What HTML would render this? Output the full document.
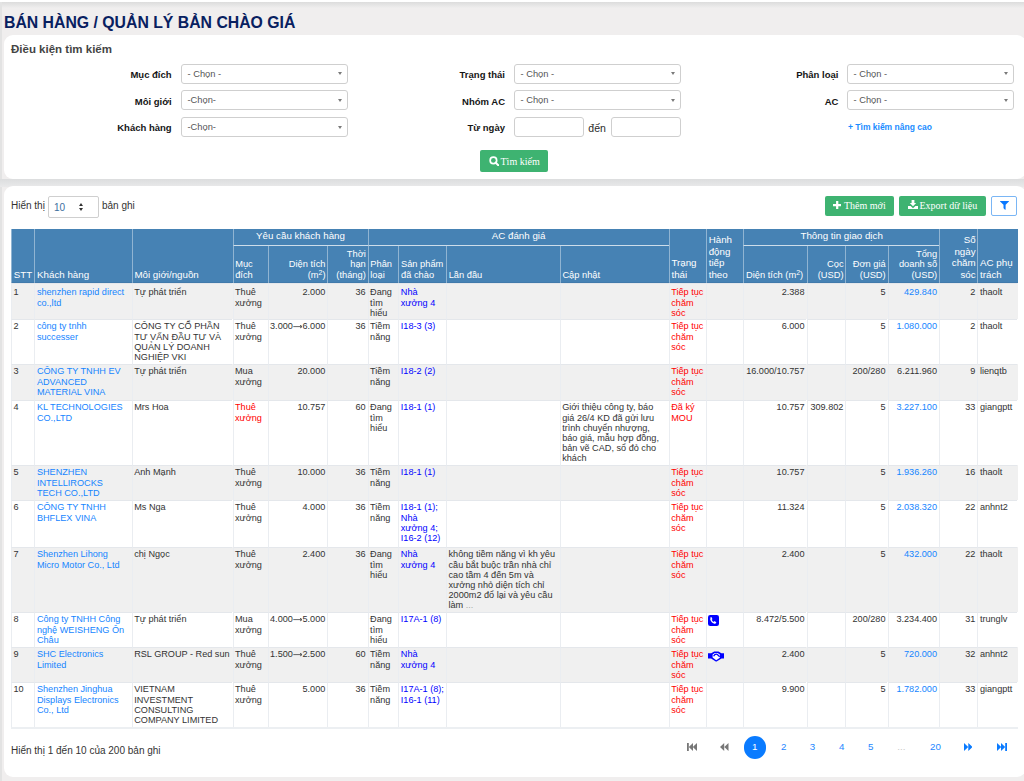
<!DOCTYPE html>
<html><head><meta charset="utf-8">
<style>
*{box-sizing:border-box;}
html,body{margin:0;padding:0;}
body{width:1024px;height:781px;overflow:hidden;position:relative;background:#f0eeee;font-family:"Liberation Sans",sans-serif;color:#333;}
.topbar{position:absolute;left:0;top:0;width:1024px;height:2px;background:#fff;}
.topshade{position:absolute;left:0;top:2px;width:1024px;height:6px;background:linear-gradient(#dcdcdc,#efeeee);}
.leftbar{position:absolute;left:0;top:2px;width:2.2px;height:779px;background:#e3e3e3;}
.title{position:absolute;left:4px;top:13.7px;font-size:15.8px;font-weight:bold;color:#082060;white-space:nowrap;line-height:18px;}
.card{position:absolute;background:#fff;border-radius:9px;}
#c1{left:4px;top:35.2px;width:1022px;height:144px;}
#c2{left:4px;top:186.3px;width:1022px;height:590.7px;}
.gap{position:absolute;left:0;top:179px;width:1024px;height:7.5px;background:linear-gradient(#dcddde,#e9e9ea);}
.abs{position:absolute;white-space:nowrap;}
.h2{left:11px;top:43px;font-size:11.5px;font-weight:bold;color:#444;}
.lbl{font-size:9.5px;font-weight:bold;color:#151515;text-align:right;width:120px;line-height:12px;}
.sel{position:absolute;height:20px;border:1px solid #cfcfcf;border-radius:3px;background:#fff;font-size:9.3px;color:#555;padding-left:5.5px;line-height:18px;}
.sel .arr{position:absolute;right:5.4px;top:7.6px;width:0;height:0;border-left:2.6px solid transparent;border-right:2.6px solid transparent;border-top:3.2px solid #7a7a7a;}
.btn{position:absolute;background:#3eb371;border-radius:2px;color:#fff;font-family:"Liberation Serif",serif;}

.thead{position:absolute;background:#4682b4;}
.hc{position:absolute;border-left:1px solid rgba(255,255,255,.4);border-bottom:1px solid rgba(255,255,255,.73);color:#fff;font-size:9.75px;line-height:10.9px;white-space:nowrap;}
.hc .in{position:absolute;left:1.7px;right:1.8px;}
.hc.ar .in{text-align:right;}
.hc.ac .in{text-align:center;}
.hc .b{bottom:1.3px;}
.hc .m{top:1.8px;}
.hc sup{font-size:7px;line-height:0;vertical-align:3px;}
.tr{position:absolute;}
.td{position:absolute;border-left:1px solid #eaedf1;border-top:1px solid #e4e7eb;font-size:9.15px;line-height:10.24px;padding:1.3px 2px 0 1.5px;white-space:nowrap;color:#333;}
.r0 .td{padding-top:3.3px;}
.td.ar{text-align:right;}
.lk{color:#1585ff;}
.bl{color:#0000ff;}
.rd{color:#ff0000;}
.dots{color:#aaa;}
.ico{position:absolute;}
.tbot{position:absolute;height:2px;background:#eceff2;}
.pg{position:absolute;top:741.4px;font-size:9.75px;color:#1e88ff;line-height:11px;text-align:center;width:20px;}
.bt{font-family:"Liberation Serif",serif;font-size:10px;color:#fff;line-height:12px;}
</style></head><body>
<div class="topbar"></div><div class="topshade"></div><div class="leftbar"></div>
<div class="title">BÁN HÀNG / QUẢN LÝ BẢN CHÀO GIÁ</div>
<div class="gap"></div>
<div class="card" id="c1"></div>
<div class="card" id="c2"></div>

<div class="abs h2">Điều kiện tìm kiếm</div>

<!-- column 1 -->
<div class="abs lbl" style="left:51.6px;top:69px;">Mục đích</div>
<div class="abs lbl" style="left:51.6px;top:95.5px;">Môi giới</div>
<div class="abs lbl" style="left:51.6px;top:122px;">Khách hàng</div>
<div class="sel" style="left:181px;top:63.5px;width:167px;">- Chọn -<span class="arr"></span></div>
<div class="sel" style="left:181px;top:90px;width:167px;">-Chọn-<span class="arr"></span></div>
<div class="sel" style="left:181px;top:117px;width:167px;">-Chọn-<span class="arr"></span></div>
<!-- column 2 -->
<div class="abs lbl" style="left:385px;top:69px;">Trạng thái</div>
<div class="abs lbl" style="left:385px;top:95.5px;">Nhóm AC</div>
<div class="abs lbl" style="left:385px;top:122px;">Từ ngày</div>
<div class="sel" style="left:514px;top:63.5px;width:167px;">- Chọn -<span class="arr"></span></div>
<div class="sel" style="left:514px;top:90px;width:167px;">- Chọn -<span class="arr"></span></div>
<div class="sel" style="left:514px;top:117px;width:70px;"></div>
<div class="abs" style="left:588.3px;top:122.2px;font-size:10.5px;line-height:12px;color:#2a2a2a;">đến</div>
<div class="sel" style="left:611px;top:117px;width:70px;"></div>
<!-- column 3 -->
<div class="abs lbl" style="left:718.4px;top:69px;">Phân loại</div>
<div class="abs lbl" style="left:718.4px;top:95.5px;">AC</div>
<div class="sel" style="left:847px;top:63.5px;width:167px;">- Chọn -<span class="arr"></span></div>
<div class="sel" style="left:847px;top:90px;width:167px;">- Chọn -<span class="arr"></span></div>
<div class="abs" style="left:848px;top:122px;font-size:8.5px;font-weight:bold;color:#1a8cff;">+ Tìm kiếm nâng cao</div>

<div class="btn" style="left:480px;top:150px;width:68px;height:21.5px;"></div>
<svg class="abs" style="left:488.5px;top:155.5px" width="10.5" height="10.5" viewBox="0 0 10 10"><circle cx="4.2" cy="4.2" r="3.1" fill="none" stroke="#fff" stroke-width="1.6"/><path d="M6.3 6.3L9 9" stroke="#fff" stroke-width="1.9" stroke-linecap="round"/></svg>
<div class="abs bt" style="left:500.5px;top:155.5px;">Tìm kiếm</div>


<div class="abs" style="left:11px;top:200px;font-size:10px;color:#333;">Hiển thị</div>
<div class="sel" style="left:48px;top:195.5px;width:51px;height:22px;color:#3d6fa0;line-height:21px;padding-left:5px;font-size:10px;border-radius:2px;">10<span style="position:absolute;left:29.7px;top:6px;width:0;height:0;border-left:2.7px solid transparent;border-right:2.7px solid transparent;border-bottom:3.3px solid #333;"></span><span style="position:absolute;left:29.7px;top:11px;width:0;height:0;border-left:2.7px solid transparent;border-right:2.7px solid transparent;border-top:3.3px solid #333;"></span></div>
<div class="abs" style="left:102px;top:200px;font-size:10px;color:#333;">bản ghi</div>
<div class="btn" style="left:825px;top:195.5px;width:69px;height:20.5px;"></div>
<svg class="abs" style="left:833px;top:200.8px" width="8.4" height="8.4" viewBox="0 0 9 9"><path d="M3.3 0h2.4v3.3H9v2.4H5.7V9H3.3V5.7H0V3.3h3.3z" fill="#fff"/></svg>
<div class="abs bt" style="left:844px;top:199.5px;">Thêm mới</div>
<div class="btn" style="left:899px;top:195.5px;width:86.5px;height:20.5px;"></div>
<svg class="abs" style="left:907.5px;top:200px" width="10" height="9" viewBox="0 0 10 9"><path d="M3.6 0h2.8v3H8.2L5 6.2 1.8 3h1.8z" fill="#fff"/><path d="M0 6h2.6L5 8.2 7.4 6H10v3H0z" fill="#fff"/></svg>
<div class="abs bt" style="left:919.5px;top:199.5px;">Export dữ liệu</div>
<div class="abs" style="left:991px;top:195.5px;width:26px;height:20.5px;border:1px solid #7ab6f5;border-radius:2px;background:#fff;"></div>
<svg class="abs" style="left:999.5px;top:201px" width="9" height="9" viewBox="0 0 9 9"><path d="M0.3 0h8.4c.3 0 .4.3.2.5L5.6 3.8v4.6c0 .3-.3.5-.6.3L3.8 7.6c-.2-.1-.3-.3-.3-.5V3.8L.1.5C-.1.3 0 0 .3 0z" fill="#0a78ff"/></svg>
<div class="thead" style="left:11px;top:229px;width:1006.5px;height:54px"></div>
<div class="hc al" style="left:11px;top:229px;width:23.4px;height:54px;border-bottom:none;"><div class="in b" style="line-height:11.5px;bottom:2.82px">STT</div></div>
<div class="hc al" style="left:34.4px;top:229px;width:97.29999999999998px;height:54px;border-bottom:none;"><div class="in b" style="line-height:11.5px;bottom:2.82px">Khách hàng</div></div>
<div class="hc al" style="left:131.7px;top:229px;width:100.80000000000001px;height:54px;border-bottom:none;"><div class="in b" style="line-height:11.5px;bottom:2.82px">Môi giới/nguồn</div></div>
<div class="hc ac" style="left:232.5px;top:229px;width:135.10000000000002px;height:16.5px;"><div class="in m" style="">Yêu cầu khách hàng</div></div>
<div class="hc ac" style="left:367.6px;top:229px;width:301.15px;height:16.5px;"><div class="in m" style="">AC đánh giá</div></div>
<div class="hc al" style="left:668.75px;top:229px;width:37.25px;height:54px;border-bottom:none;"><div class="in b" style="line-height:11.5px;bottom:2.82px">Trạng<br>thái</div></div>
<div class="hc al" style="left:706px;top:229px;width:37.39999999999998px;height:54px;border-bottom:none;"><div class="in b" style="line-height:11.5px;bottom:2.82px">Hành<br>động<br>tiếp<br>theo</div></div>
<div class="hc ac" style="left:743.4px;top:229px;width:195.60000000000002px;height:16.5px;"><div class="in m" style="">Thông tin giao dịch</div></div>
<div class="hc ar" style="left:939px;top:229px;width:38.39999999999998px;height:54px;border-bottom:none;"><div class="in b" style="line-height:11.5px;bottom:2.82px">Số<br>ngày<br>chăm<br>sóc</div></div>
<div class="hc al" style="left:977.4px;top:229px;width:40.10000000000002px;height:54px;border-bottom:none;"><div class="in b" style="line-height:11.5px;bottom:2.82px">AC phụ<br>trách</div></div>
<div class="abs" style="left:11px;top:282px;width:1006.5px;height:1px;background:rgba(0,0,40,.06)"></div>
<div class="hc al" style="left:232.5px;top:245.5px;width:35.0px;height:37.5px;font-size:9.3px;border-bottom:none;"><div class="in b" style="line-height:10.6px;bottom:2.47px">Mục<br>đích</div></div>
<div class="hc ar" style="left:267.5px;top:245.5px;width:59.80000000000001px;height:37.5px;font-size:9.3px;border-bottom:none;"><div class="in b" style="line-height:10.6px;bottom:2.47px">Diện tích<br>(m<sup>2</sup>)</div></div>
<div class="hc ar" style="left:327.3px;top:245.5px;width:40.30000000000001px;height:37.5px;font-size:9.3px;border-bottom:none;"><div class="in b" style="line-height:10.6px;bottom:2.47px">Thời<br>hạn<br>(tháng)</div></div>
<div class="hc al" style="left:367.6px;top:245.5px;width:30.69999999999999px;height:37.5px;font-size:9.3px;border-bottom:none;"><div class="in b" style="line-height:10.6px;bottom:2.47px">Phân<br>loại</div></div>
<div class="hc al" style="left:398.3px;top:245.5px;width:47.69999999999999px;height:37.5px;font-size:9.3px;border-bottom:none;"><div class="in b" style="line-height:10.6px;bottom:2.47px">Sản phẩm<br>đã chào</div></div>
<div class="hc al" style="left:446px;top:245.5px;width:113.70000000000005px;height:37.5px;font-size:9.3px;border-bottom:none;"><div class="in b" style="line-height:10.6px;bottom:2.47px">Lần đầu</div></div>
<div class="hc al" style="left:559.7px;top:245.5px;width:109.04999999999995px;height:37.5px;font-size:9.3px;border-bottom:none;"><div class="in b" style="line-height:10.6px;bottom:2.47px">Cập nhật</div></div>
<div class="hc al" style="left:743.4px;top:245.5px;width:63.10000000000002px;height:37.5px;font-size:9.3px;border-bottom:none;"><div class="in b" style="line-height:10.6px;bottom:2.47px">Diện tích (m<sup>2</sup>)</div></div>
<div class="hc ar" style="left:806.5px;top:245.5px;width:38.89999999999998px;height:37.5px;font-size:9.3px;border-bottom:none;"><div class="in b" style="line-height:10.6px;bottom:2.47px">Cọc<br>(USD)</div></div>
<div class="hc ar" style="left:845.4px;top:245.5px;width:42.10000000000002px;height:37.5px;font-size:9.3px;border-bottom:none;"><div class="in b" style="line-height:10.6px;bottom:2.47px">Đơn giá<br>(USD)</div></div>
<div class="hc ar" style="left:887.5px;top:245.5px;width:51.5px;height:37.5px;font-size:9.3px;border-bottom:none;"><div class="in b" style="line-height:10.6px;bottom:2.47px">Tổng<br>doanh số<br>(USD)</div></div>
<div class="tr" style="left:11px;top:283px;width:1006.5px;height:36px;background:#f0f0f0"></div>
<div class="td al " style="left:11px;top:283px;width:23.4px;height:36px;padding-top:3.3px">1</div>
<div class="td al lk" style="left:34.4px;top:283px;width:97.29999999999998px;height:36px;padding-top:3.3px">shenzhen rapid direct<br>co.,ltd</div>
<div class="td al " style="left:131.7px;top:283px;width:100.80000000000001px;height:36px;padding-top:3.3px">Tự phát triển</div>
<div class="td al " style="left:232.5px;top:283px;width:35.0px;height:36px;padding-top:3.3px">Thuê<br>xưởng</div>
<div class="td ar " style="left:267.5px;top:283px;width:59.80000000000001px;height:36px;padding-top:3.3px">2.000</div>
<div class="td ar " style="left:327.3px;top:283px;width:40.30000000000001px;height:36px;padding-top:3.3px">36</div>
<div class="td al " style="left:367.6px;top:283px;width:30.69999999999999px;height:36px;padding-top:3.3px">Đang<br>tìm<br>hiểu</div>
<div class="td al bl" style="left:398.3px;top:283px;width:47.69999999999999px;height:36px;padding-top:3.3px">Nhà<br>xưởng 4</div>
<div class="td al " style="left:446px;top:283px;width:113.70000000000005px;height:36px;padding-top:3.3px"></div>
<div class="td al " style="left:559.7px;top:283px;width:109.04999999999995px;height:36px;padding-top:3.3px"></div>
<div class="td al rd" style="left:668.75px;top:283px;width:37.25px;height:36px;padding-top:3.3px">Tiếp tục<br>chăm<br>sóc</div>
<div class="td al " style="left:706px;top:283px;width:37.39999999999998px;height:36px;padding-top:3.3px"></div>
<div class="td ar " style="left:743.4px;top:283px;width:63.10000000000002px;height:36px;padding-top:3.3px">2.388</div>
<div class="td ar " style="left:806.5px;top:283px;width:38.89999999999998px;height:36px;padding-top:3.3px"></div>
<div class="td ar " style="left:845.4px;top:283px;width:42.10000000000002px;height:36px;padding-top:3.3px">5</div>
<div class="td ar lk" style="left:887.5px;top:283px;width:51.5px;height:36px;padding-top:3.3px">429.840</div>
<div class="td ar " style="left:939px;top:283px;width:38.39999999999998px;height:36px;padding-top:3.3px">2</div>
<div class="td al " style="left:977.4px;top:283px;width:40.10000000000002px;height:36px;padding-top:3.3px">thaolt</div>
<div class="tr" style="left:11px;top:319px;width:1006.5px;height:45px;background:#fff"></div>
<div class="td al " style="left:11px;top:319px;width:23.4px;height:45px">2</div>
<div class="td al lk" style="left:34.4px;top:319px;width:97.29999999999998px;height:45px">công ty tnhh<br>successer</div>
<div class="td al " style="left:131.7px;top:319px;width:100.80000000000001px;height:45px">CÔNG TY CỔ PHẦN<br>TƯ VẤN ĐẦU TƯ VÀ<br>QUẢN LÝ DOANH<br>NGHIỆP VKI</div>
<div class="td al " style="left:232.5px;top:319px;width:35.0px;height:45px">Thuê<br>xưởng</div>
<div class="td ar " style="left:267.5px;top:319px;width:59.80000000000001px;height:45px">3.000<svg width="9.6" height="5" viewBox="0 0 9.6 5" style="vertical-align:0px"><path d="M0.3 2.6H9" stroke="#555" stroke-width="0.9"/><path d="M7 1.2L9.3 2.6 7 4" fill="none" stroke="#555" stroke-width="0.9"/></svg>6.000</div>
<div class="td ar " style="left:327.3px;top:319px;width:40.30000000000001px;height:45px">36</div>
<div class="td al " style="left:367.6px;top:319px;width:30.69999999999999px;height:45px">Tiềm<br>năng</div>
<div class="td al bl" style="left:398.3px;top:319px;width:47.69999999999999px;height:45px">I18-3 (3)</div>
<div class="td al " style="left:446px;top:319px;width:113.70000000000005px;height:45px"></div>
<div class="td al " style="left:559.7px;top:319px;width:109.04999999999995px;height:45px"></div>
<div class="td al rd" style="left:668.75px;top:319px;width:37.25px;height:45px">Tiếp tục<br>chăm<br>sóc</div>
<div class="td al " style="left:706px;top:319px;width:37.39999999999998px;height:45px"></div>
<div class="td ar " style="left:743.4px;top:319px;width:63.10000000000002px;height:45px">6.000</div>
<div class="td ar " style="left:806.5px;top:319px;width:38.89999999999998px;height:45px"></div>
<div class="td ar " style="left:845.4px;top:319px;width:42.10000000000002px;height:45px">5</div>
<div class="td ar lk" style="left:887.5px;top:319px;width:51.5px;height:45px">1.080.000</div>
<div class="td ar " style="left:939px;top:319px;width:38.39999999999998px;height:45px">2</div>
<div class="td al " style="left:977.4px;top:319px;width:40.10000000000002px;height:45px">thaolt</div>
<div class="tr" style="left:11px;top:364px;width:1006.5px;height:36px;background:#f0f0f0"></div>
<div class="td al " style="left:11px;top:364px;width:23.4px;height:36px">3</div>
<div class="td al lk" style="left:34.4px;top:364px;width:97.29999999999998px;height:36px">CÔNG TY TNHH EV<br>ADVANCED<br>MATERIAL VINA</div>
<div class="td al " style="left:131.7px;top:364px;width:100.80000000000001px;height:36px">Tự phát triển</div>
<div class="td al " style="left:232.5px;top:364px;width:35.0px;height:36px">Mua<br>xưởng</div>
<div class="td ar " style="left:267.5px;top:364px;width:59.80000000000001px;height:36px">20.000</div>
<div class="td ar " style="left:327.3px;top:364px;width:40.30000000000001px;height:36px"></div>
<div class="td al " style="left:367.6px;top:364px;width:30.69999999999999px;height:36px">Tiềm<br>năng</div>
<div class="td al bl" style="left:398.3px;top:364px;width:47.69999999999999px;height:36px">I18-2 (2)</div>
<div class="td al " style="left:446px;top:364px;width:113.70000000000005px;height:36px"></div>
<div class="td al " style="left:559.7px;top:364px;width:109.04999999999995px;height:36px"></div>
<div class="td al rd" style="left:668.75px;top:364px;width:37.25px;height:36px">Tiếp tục<br>chăm<br>sóc</div>
<div class="td al " style="left:706px;top:364px;width:37.39999999999998px;height:36px"></div>
<div class="td ar " style="left:743.4px;top:364px;width:63.10000000000002px;height:36px">16.000/10.757</div>
<div class="td ar " style="left:806.5px;top:364px;width:38.89999999999998px;height:36px"></div>
<div class="td ar " style="left:845.4px;top:364px;width:42.10000000000002px;height:36px">200/280</div>
<div class="td ar " style="left:887.5px;top:364px;width:51.5px;height:36px">6.211.960</div>
<div class="td ar " style="left:939px;top:364px;width:38.39999999999998px;height:36px">9</div>
<div class="td al " style="left:977.4px;top:364px;width:40.10000000000002px;height:36px">lienqtb</div>
<div class="tr" style="left:11px;top:400px;width:1006.5px;height:65px;background:#fff"></div>
<div class="td al " style="left:11px;top:400px;width:23.4px;height:65px">4</div>
<div class="td al lk" style="left:34.4px;top:400px;width:97.29999999999998px;height:65px">KL TECHNOLOGIES<br>CO.,LTD</div>
<div class="td al " style="left:131.7px;top:400px;width:100.80000000000001px;height:65px">Mrs Hoa</div>
<div class="td al rd" style="left:232.5px;top:400px;width:35.0px;height:65px">Thuê<br>xưởng</div>
<div class="td ar " style="left:267.5px;top:400px;width:59.80000000000001px;height:65px">10.757</div>
<div class="td ar " style="left:327.3px;top:400px;width:40.30000000000001px;height:65px">60</div>
<div class="td al " style="left:367.6px;top:400px;width:30.69999999999999px;height:65px">Đang<br>tìm<br>hiểu</div>
<div class="td al bl" style="left:398.3px;top:400px;width:47.69999999999999px;height:65px">I18-1 (1)</div>
<div class="td al " style="left:446px;top:400px;width:113.70000000000005px;height:65px"></div>
<div class="td al " style="left:559.7px;top:400px;width:109.04999999999995px;height:65px">Giới thiệu công ty, báo<br>giá 26/4 KD đã gửi lưu<br>trình chuyển nhượng,<br>báo giá, mẫu hợp đồng,<br>bản vẽ CAD, sổ đỏ cho<br>khách</div>
<div class="td al rd" style="left:668.75px;top:400px;width:37.25px;height:65px">Đã ký<br>MOU</div>
<div class="td al " style="left:706px;top:400px;width:37.39999999999998px;height:65px"></div>
<div class="td ar " style="left:743.4px;top:400px;width:63.10000000000002px;height:65px">10.757</div>
<div class="td ar " style="left:806.5px;top:400px;width:38.89999999999998px;height:65px">309.802</div>
<div class="td ar " style="left:845.4px;top:400px;width:42.10000000000002px;height:65px">5</div>
<div class="td ar lk" style="left:887.5px;top:400px;width:51.5px;height:65px">3.227.100</div>
<div class="td ar " style="left:939px;top:400px;width:38.39999999999998px;height:65px">33</div>
<div class="td al " style="left:977.4px;top:400px;width:40.10000000000002px;height:65px">giangptt</div>
<div class="tr" style="left:11px;top:465px;width:1006.5px;height:35px;background:#f0f0f0"></div>
<div class="td al " style="left:11px;top:465px;width:23.4px;height:35px">5</div>
<div class="td al lk" style="left:34.4px;top:465px;width:97.29999999999998px;height:35px">SHENZHEN<br>INTELLIROCKS<br>TECH CO.,LTD</div>
<div class="td al " style="left:131.7px;top:465px;width:100.80000000000001px;height:35px">Anh Mạnh</div>
<div class="td al " style="left:232.5px;top:465px;width:35.0px;height:35px">Thuê<br>xưởng</div>
<div class="td ar " style="left:267.5px;top:465px;width:59.80000000000001px;height:35px">10.000</div>
<div class="td ar " style="left:327.3px;top:465px;width:40.30000000000001px;height:35px">36</div>
<div class="td al " style="left:367.6px;top:465px;width:30.69999999999999px;height:35px">Tiềm<br>năng</div>
<div class="td al bl" style="left:398.3px;top:465px;width:47.69999999999999px;height:35px">I18-1 (1)</div>
<div class="td al " style="left:446px;top:465px;width:113.70000000000005px;height:35px"></div>
<div class="td al " style="left:559.7px;top:465px;width:109.04999999999995px;height:35px"></div>
<div class="td al rd" style="left:668.75px;top:465px;width:37.25px;height:35px">Tiếp tục<br>chăm<br>sóc</div>
<div class="td al " style="left:706px;top:465px;width:37.39999999999998px;height:35px"></div>
<div class="td ar " style="left:743.4px;top:465px;width:63.10000000000002px;height:35px">10.757</div>
<div class="td ar " style="left:806.5px;top:465px;width:38.89999999999998px;height:35px"></div>
<div class="td ar " style="left:845.4px;top:465px;width:42.10000000000002px;height:35px">5</div>
<div class="td ar lk" style="left:887.5px;top:465px;width:51.5px;height:35px">1.936.260</div>
<div class="td ar " style="left:939px;top:465px;width:38.39999999999998px;height:35px">16</div>
<div class="td al " style="left:977.4px;top:465px;width:40.10000000000002px;height:35px">thaolt</div>
<div class="tr" style="left:11px;top:500px;width:1006.5px;height:47px;background:#fff"></div>
<div class="td al " style="left:11px;top:500px;width:23.4px;height:47px">6</div>
<div class="td al lk" style="left:34.4px;top:500px;width:97.29999999999998px;height:47px">CÔNG TY TNHH<br>BHFLEX VINA</div>
<div class="td al " style="left:131.7px;top:500px;width:100.80000000000001px;height:47px">Ms Nga</div>
<div class="td al " style="left:232.5px;top:500px;width:35.0px;height:47px">Thuê<br>xưởng</div>
<div class="td ar " style="left:267.5px;top:500px;width:59.80000000000001px;height:47px">4.000</div>
<div class="td ar " style="left:327.3px;top:500px;width:40.30000000000001px;height:47px">36</div>
<div class="td al " style="left:367.6px;top:500px;width:30.69999999999999px;height:47px">Tiềm<br>năng</div>
<div class="td al bl" style="left:398.3px;top:500px;width:47.69999999999999px;height:47px">I18-1 (1);<br>Nhà<br>xưởng 4;<br>I16-2 (12)</div>
<div class="td al " style="left:446px;top:500px;width:113.70000000000005px;height:47px"></div>
<div class="td al " style="left:559.7px;top:500px;width:109.04999999999995px;height:47px"></div>
<div class="td al rd" style="left:668.75px;top:500px;width:37.25px;height:47px">Tiếp tục<br>chăm<br>sóc</div>
<div class="td al " style="left:706px;top:500px;width:37.39999999999998px;height:47px"></div>
<div class="td ar " style="left:743.4px;top:500px;width:63.10000000000002px;height:47px">11.324</div>
<div class="td ar " style="left:806.5px;top:500px;width:38.89999999999998px;height:47px"></div>
<div class="td ar " style="left:845.4px;top:500px;width:42.10000000000002px;height:47px">5</div>
<div class="td ar lk" style="left:887.5px;top:500px;width:51.5px;height:47px">2.038.320</div>
<div class="td ar " style="left:939px;top:500px;width:38.39999999999998px;height:47px">22</div>
<div class="td al " style="left:977.4px;top:500px;width:40.10000000000002px;height:47px">anhnt2</div>
<div class="tr" style="left:11px;top:547px;width:1006.5px;height:65px;background:#f0f0f0"></div>
<div class="td al " style="left:11px;top:547px;width:23.4px;height:65px">7</div>
<div class="td al lk" style="left:34.4px;top:547px;width:97.29999999999998px;height:65px">Shenzhen Lihong<br>Micro Motor Co., Ltd</div>
<div class="td al " style="left:131.7px;top:547px;width:100.80000000000001px;height:65px">chị Ngọc</div>
<div class="td al " style="left:232.5px;top:547px;width:35.0px;height:65px">Thuê<br>xưởng</div>
<div class="td ar " style="left:267.5px;top:547px;width:59.80000000000001px;height:65px">2.400</div>
<div class="td ar " style="left:327.3px;top:547px;width:40.30000000000001px;height:65px">36</div>
<div class="td al " style="left:367.6px;top:547px;width:30.69999999999999px;height:65px">Đang<br>tìm<br>hiểu</div>
<div class="td al bl" style="left:398.3px;top:547px;width:47.69999999999999px;height:65px">Nhà<br>xưởng 4</div>
<div class="td al " style="left:446px;top:547px;width:113.70000000000005px;height:65px">không tiềm năng vì kh yêu<br>cầu bắt buộc trần nhà chỉ<br>cao tầm 4 đến 5m và<br>xưởng nhỏ diện tích chỉ<br>2000m2 đổ lại và yêu cầu<br>làm <span class="dots">...</span></div>
<div class="td al " style="left:559.7px;top:547px;width:109.04999999999995px;height:65px"></div>
<div class="td al rd" style="left:668.75px;top:547px;width:37.25px;height:65px">Tiếp tục<br>chăm<br>sóc</div>
<div class="td al " style="left:706px;top:547px;width:37.39999999999998px;height:65px"></div>
<div class="td ar " style="left:743.4px;top:547px;width:63.10000000000002px;height:65px">2.400</div>
<div class="td ar " style="left:806.5px;top:547px;width:38.89999999999998px;height:65px"></div>
<div class="td ar " style="left:845.4px;top:547px;width:42.10000000000002px;height:65px">5</div>
<div class="td ar lk" style="left:887.5px;top:547px;width:51.5px;height:65px">432.000</div>
<div class="td ar " style="left:939px;top:547px;width:38.39999999999998px;height:65px">22</div>
<div class="td al " style="left:977.4px;top:547px;width:40.10000000000002px;height:65px">thaolt</div>
<div class="tr" style="left:11px;top:612px;width:1006.5px;height:35px;background:#fff"></div>
<div class="td al " style="left:11px;top:612px;width:23.4px;height:35px">8</div>
<div class="td al lk" style="left:34.4px;top:612px;width:97.29999999999998px;height:35px">Công ty TNHH Công<br>nghệ WEISHENG Ôn<br>Châu</div>
<div class="td al " style="left:131.7px;top:612px;width:100.80000000000001px;height:35px">Tự phát triển</div>
<div class="td al " style="left:232.5px;top:612px;width:35.0px;height:35px">Mua<br>xưởng</div>
<div class="td ar " style="left:267.5px;top:612px;width:59.80000000000001px;height:35px">4.000<svg width="9.6" height="5" viewBox="0 0 9.6 5" style="vertical-align:0px"><path d="M0.3 2.6H9" stroke="#555" stroke-width="0.9"/><path d="M7 1.2L9.3 2.6 7 4" fill="none" stroke="#555" stroke-width="0.9"/></svg>5.000</div>
<div class="td ar " style="left:327.3px;top:612px;width:40.30000000000001px;height:35px"></div>
<div class="td al " style="left:367.6px;top:612px;width:30.69999999999999px;height:35px">Đang<br>tìm<br>hiểu</div>
<div class="td al bl" style="left:398.3px;top:612px;width:47.69999999999999px;height:35px">I17A-1 (8)</div>
<div class="td al " style="left:446px;top:612px;width:113.70000000000005px;height:35px"></div>
<div class="td al " style="left:559.7px;top:612px;width:109.04999999999995px;height:35px"></div>
<div class="td al rd" style="left:668.75px;top:612px;width:37.25px;height:35px">Tiếp tục<br>chăm<br>sóc</div>
<div class="td al " style="left:706px;top:612px;width:37.39999999999998px;height:35px"><svg class="ico" style="left:1px;top:1.5px" width="11" height="11" viewBox="0 0 11 11"><rect x="0" y="0" width="11" height="11" rx="2.2" fill="#0000ff"/><path d="M2.5 2.4c.4-.4.9-.4 1.1 0l.7 1.3c.2.3.1.6-.2.8l-.4.3c.4.9 1 1.6 1.9 2.1l.3-.4c.2-.3.5-.3.8-.2l1.3.7c.4.2.4.7 0 1l-.5.5c-.4.4-1 .4-1.6.1C4.3 7.7 3.2 6.6 2.4 4.9c-.3-.6-.2-1.2.1-1.6z" fill="#fff"/></svg></div>
<div class="td ar " style="left:743.4px;top:612px;width:63.10000000000002px;height:35px">8.472/5.500</div>
<div class="td ar " style="left:806.5px;top:612px;width:38.89999999999998px;height:35px"></div>
<div class="td ar " style="left:845.4px;top:612px;width:42.10000000000002px;height:35px">200/280</div>
<div class="td ar " style="left:887.5px;top:612px;width:51.5px;height:35px">3.234.400</div>
<div class="td ar " style="left:939px;top:612px;width:38.39999999999998px;height:35px">31</div>
<div class="td al " style="left:977.4px;top:612px;width:40.10000000000002px;height:35px">trunglv</div>
<div class="tr" style="left:11px;top:647px;width:1006.5px;height:35px;background:#f0f0f0"></div>
<div class="td al " style="left:11px;top:647px;width:23.4px;height:35px">9</div>
<div class="td al lk" style="left:34.4px;top:647px;width:97.29999999999998px;height:35px">SHC Electronics<br>Limited</div>
<div class="td al " style="left:131.7px;top:647px;width:100.80000000000001px;height:35px">RSL GROUP - Red sun</div>
<div class="td al " style="left:232.5px;top:647px;width:35.0px;height:35px">Thuê<br>xưởng</div>
<div class="td ar " style="left:267.5px;top:647px;width:59.80000000000001px;height:35px">1.500<svg width="9.6" height="5" viewBox="0 0 9.6 5" style="vertical-align:0px"><path d="M0.3 2.6H9" stroke="#555" stroke-width="0.9"/><path d="M7 1.2L9.3 2.6 7 4" fill="none" stroke="#555" stroke-width="0.9"/></svg>2.500</div>
<div class="td ar " style="left:327.3px;top:647px;width:40.30000000000001px;height:35px">60</div>
<div class="td al " style="left:367.6px;top:647px;width:30.69999999999999px;height:35px">Tiềm<br>năng</div>
<div class="td al bl" style="left:398.3px;top:647px;width:47.69999999999999px;height:35px">Nhà<br>xưởng 4</div>
<div class="td al " style="left:446px;top:647px;width:113.70000000000005px;height:35px"></div>
<div class="td al " style="left:559.7px;top:647px;width:109.04999999999995px;height:35px"></div>
<div class="td al rd" style="left:668.75px;top:647px;width:37.25px;height:35px">Tiếp tục<br>chăm<br>sóc</div>
<div class="td al " style="left:706px;top:647px;width:37.39999999999998px;height:35px"><svg class="ico" style="left:0.8px;top:2.9px" width="16.5" height="11" viewBox="0 0 16.5 11"><path d="M0 2.2h3.2L6.2 .4h4.2l3 1.8h3.1v5.2h-3L8.6 10.6H7.8L3.1 7.4H0z" fill="#0000ff"/><path d="M4.6 3.4L6.8 1.9h2.9l2.2 1.5v3.3L8.2 9.2 4.6 6.6z" fill="#fff"/><path d="M5.6 5.2c.9-1.6 2.1-2.5 3.5-1.9l2.6 2.4" fill="none" stroke="#0000ff" stroke-width="1.3"/></svg></div>
<div class="td ar " style="left:743.4px;top:647px;width:63.10000000000002px;height:35px">2.400</div>
<div class="td ar " style="left:806.5px;top:647px;width:38.89999999999998px;height:35px"></div>
<div class="td ar " style="left:845.4px;top:647px;width:42.10000000000002px;height:35px">5</div>
<div class="td ar lk" style="left:887.5px;top:647px;width:51.5px;height:35px">720.000</div>
<div class="td ar " style="left:939px;top:647px;width:38.39999999999998px;height:35px">32</div>
<div class="td al " style="left:977.4px;top:647px;width:40.10000000000002px;height:35px">anhnt2</div>
<div class="tr" style="left:11px;top:682px;width:1006.5px;height:46px;background:#fff"></div>
<div class="td al " style="left:11px;top:682px;width:23.4px;height:46px">10</div>
<div class="td al lk" style="left:34.4px;top:682px;width:97.29999999999998px;height:46px">Shenzhen Jinghua<br>Displays Electronics<br>Co., Ltd</div>
<div class="td al " style="left:131.7px;top:682px;width:100.80000000000001px;height:46px">VIETNAM<br>INVESTMENT<br>CONSULTING<br>COMPANY LIMITED</div>
<div class="td al " style="left:232.5px;top:682px;width:35.0px;height:46px">Thuê<br>xưởng</div>
<div class="td ar " style="left:267.5px;top:682px;width:59.80000000000001px;height:46px">5.000</div>
<div class="td ar " style="left:327.3px;top:682px;width:40.30000000000001px;height:46px">36</div>
<div class="td al " style="left:367.6px;top:682px;width:30.69999999999999px;height:46px">Tiềm<br>năng</div>
<div class="td al bl" style="left:398.3px;top:682px;width:47.69999999999999px;height:46px">I17A-1 (8);<br>I16-1 (11)</div>
<div class="td al " style="left:446px;top:682px;width:113.70000000000005px;height:46px"></div>
<div class="td al " style="left:559.7px;top:682px;width:109.04999999999995px;height:46px"></div>
<div class="td al rd" style="left:668.75px;top:682px;width:37.25px;height:46px">Tiếp tục<br>chăm<br>sóc</div>
<div class="td al " style="left:706px;top:682px;width:37.39999999999998px;height:46px"></div>
<div class="td ar " style="left:743.4px;top:682px;width:63.10000000000002px;height:46px">9.900</div>
<div class="td ar " style="left:806.5px;top:682px;width:38.89999999999998px;height:46px"></div>
<div class="td ar " style="left:845.4px;top:682px;width:42.10000000000002px;height:46px">5</div>
<div class="td ar lk" style="left:887.5px;top:682px;width:51.5px;height:46px">1.782.000</div>
<div class="td ar " style="left:939px;top:682px;width:38.39999999999998px;height:46px">33</div>
<div class="td al " style="left:977.4px;top:682px;width:40.10000000000002px;height:46px">giangptt</div>
<div class="tbot" style="left:11px;top:727px;width:1006.5px"></div>
<div class="abs" style="left:11px;top:745px;font-size:10px;color:#333;">Hiển thị 1 đến 10 của 200 bản ghi</div>
<div class="abs" style="left:743.5px;top:736px;width:22.6px;height:22.6px;border-radius:50%;background:#0a7bff;"></div>
<div class="pg" style="left:744.8px;color:#fff;">1</div>
<div class="pg" style="left:773.6px;">2</div>
<div class="pg" style="left:802.5px;">3</div>
<div class="pg" style="left:831.7px;">4</div>
<div class="pg" style="left:860.8px;">5</div>
<div class="pg" style="left:891.4px;color:#c8c8c8;">...</div>
<div class="pg" style="left:925.4px;">20</div>
<svg class="abs" style="left:686.5px;top:743.3px" width="10" height="8" viewBox="0 0 10 8"><rect x="0" y="0" width="1.8" height="8" fill="#777"/><path d="M1.8 4L6 0v8z M5.8 4L10 0v8z" fill="#777"/></svg>
<svg class="abs" style="left:720px;top:743.3px" width="8.5" height="8" viewBox="0 0 8.5 8"><path d="M0 4L4.2 0v8z M4.3 4L8.5 0v8z" fill="#777"/></svg>
<svg class="abs" style="left:963.5px;top:743.3px" width="8.5" height="8" viewBox="0 0 8.5 8"><path d="M0 0L4.2 4 0 8z M4.3 0L8.5 4 4.3 8z" fill="#0a7bff"/></svg>
<svg class="abs" style="left:996.5px;top:743.3px" width="10" height="8" viewBox="0 0 10 8"><path d="M0 0L4.2 4 0 8z M4 0L8.2 4 4 8z" fill="#0a7bff"/><rect x="8.2" y="0" width="1.8" height="8" fill="#0a7bff"/></svg>
</body></html>
